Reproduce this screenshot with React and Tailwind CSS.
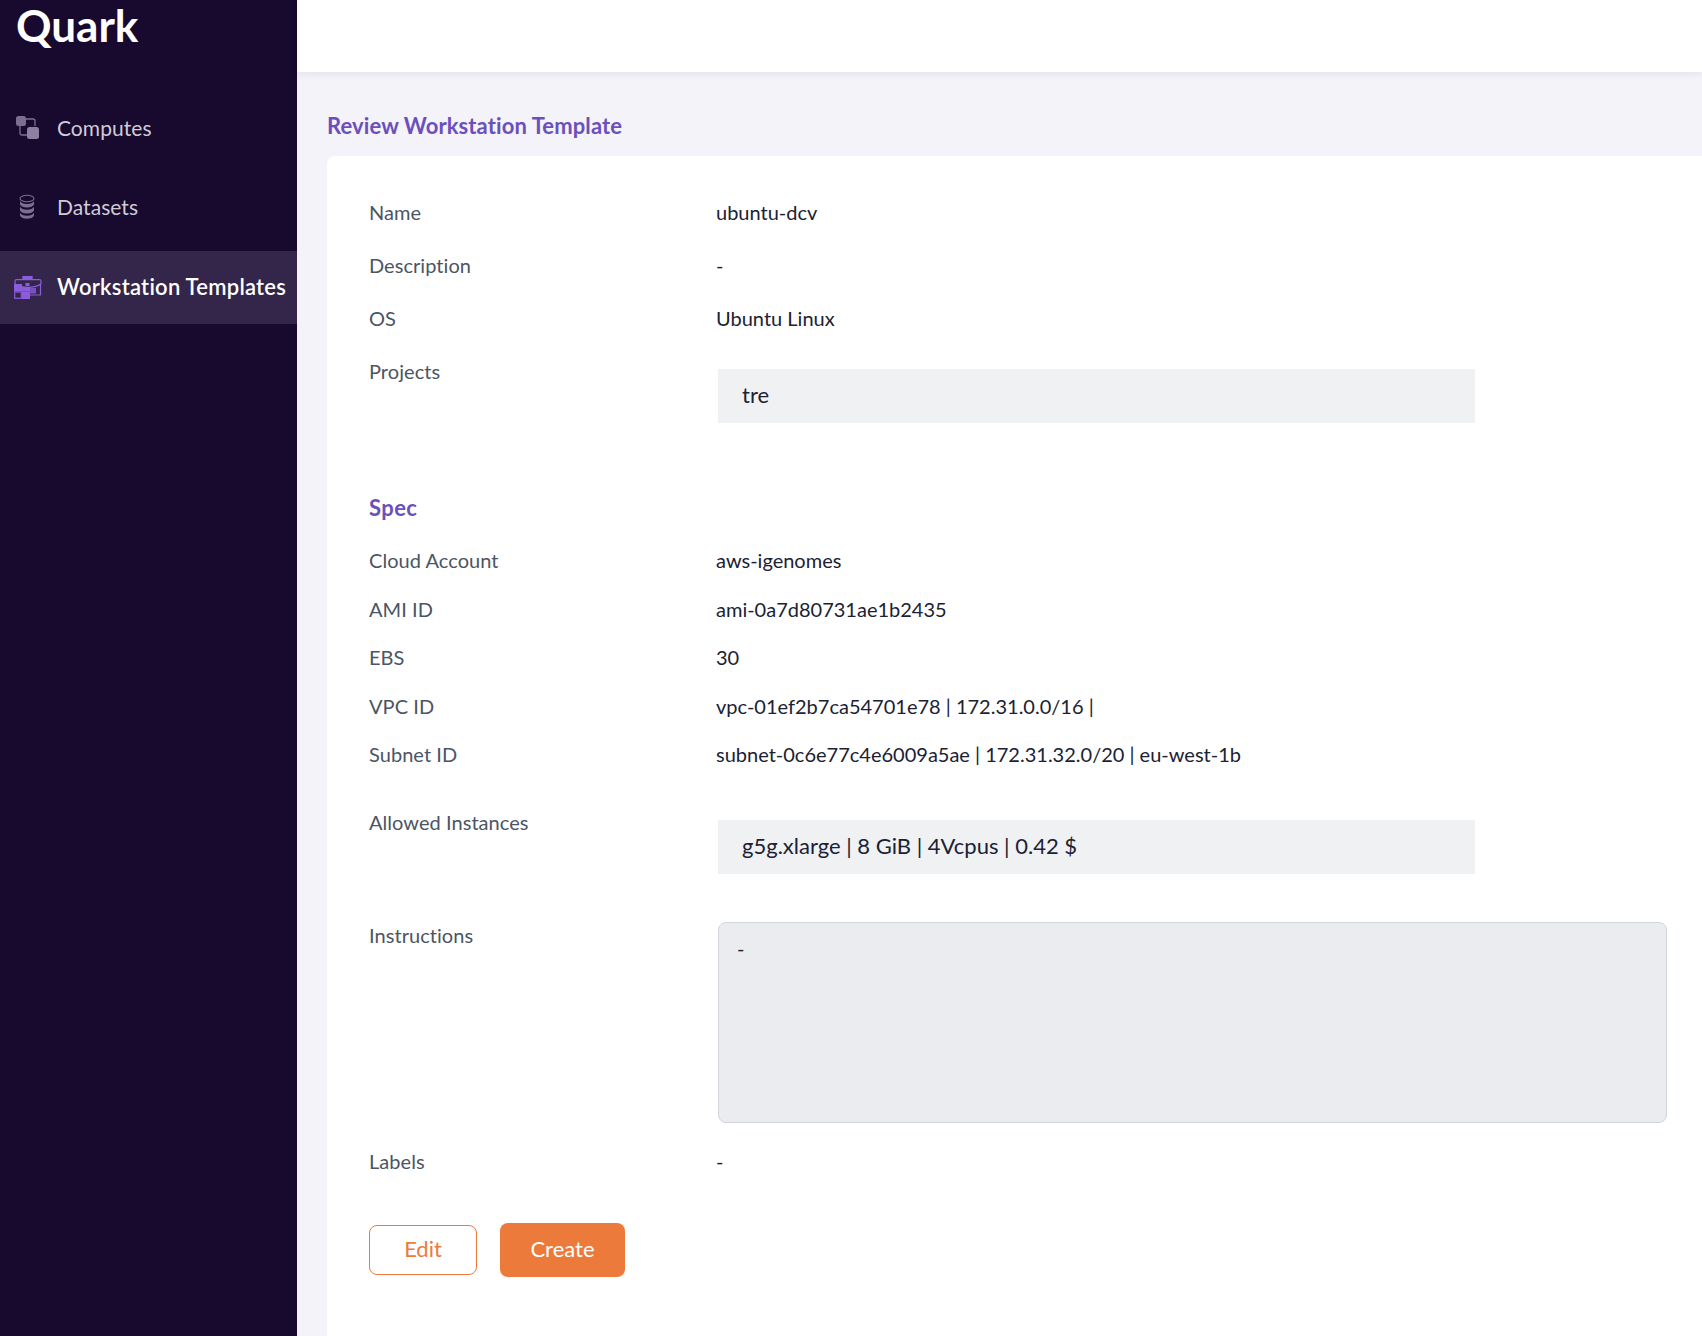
import React from "react";

function Row({ label, children, className = "" }) {
  return (
    <div className={`flex h-[26px] items-center pb-[2px] ${className}`}>
      <div className="w-[347px] shrink-0 tracking-[0.05px] text-[#4b5563]">{label}</div>
      <div className="text-[#1a2233]">{children}</div>
    </div>
  );
}

function ChipRow({ label, children, className = "" }) {
  return (
    <div className={`flex ${className}`}>
      <div className="w-[347px] shrink-0 leading-[24px] tracking-[0.05px] text-[#4b5563]">{label}</div>
      <div className="ml-[2px] mt-[10px] flex h-[54px] w-[757px] items-center bg-[#f0f1f3] pb-[3px] pl-6 text-[22px] text-[#1a2233]">
        {children}
      </div>
    </div>
  );
}

function ComputesIcon() {
  return (
    <svg width="24" height="24" viewBox="0 0 24 24" fill="none">
      <rect x="0" y="0" width="10" height="10" rx="2.5" fill="#7d6e90" />
      <rect x="11" y="11" width="12" height="12" rx="2.5" fill="#8d7fa0" />
      <path d="M10 3h7a2 2 0 0 1 2 2v5M4 10v7a2 2 0 0 0 2 2h5" stroke="#7d6e90" strokeWidth="1.3" />
    </svg>
  );
}

function DatasetIcon() {
  return (
    <svg width="16" height="26" viewBox="0 0 16 26" fill="none">
      <ellipse cx="8" cy="4.5" rx="7" ry="3.2" stroke="#7d6e90" strokeWidth="1.1" />
      <path d="M1 7c1 2 3.500 3 7 3s6-1 7-3v3.500c-1 2-3.500 3-7 3s-6-1-7-3z" fill="#7d6e90" />
      <path d="M1 12.800c1 2 3.500 3 7 3s6-1 7-3v3.700c-1 2-3.500 3-7 3s-6-1-7-3z" fill="#7d6e90" />
      <path d="M1 18.800c1 2 3.500 3 7 3s6-1 7-3v2.700c-1 2.200-3.500 3.300-7 3.300s-6-1.100-7-3.300z" fill="#7d6e90" />
    </svg>
  );
}

function WorkstationIcon() {
  return (
    <svg width="28" height="24" viewBox="0 0 28 24" fill="none">
      <path d="M9 4V1.600h9V4" fill="#8b5cdb" stroke="#8b5cdb" strokeWidth="1.400" />
      <path d="M1 6.200c0-1 .6-1.600 1.600-1.600h22.800c1 0 1.600.6 1.600 1.600v2.600c-3 2.400-7.500 3.600-13 3.600S4 11.200 1 8.800z" stroke="#8b5cdb" strokeWidth="1.200" />
      <rect x="11.500" y="8" width="4" height="3" fill="#8b5cdb" />
      <path d="M26.500 9v11H16" stroke="#8b5cdb" strokeWidth="1.200" />
      <rect x="0" y="9" width="8" height="7.500" fill="#8b5cdb" />
      <rect x="8" y="16.500" width="8" height="7.500" fill="#8b5cdb" />
      <rect x="0.700" y="17" width="6.600" height="6.300" stroke="#8b5cdb" strokeWidth="1.200" />
      <rect x="8" y="12" width="8" height="4.500" fill="#8b5cdb" />
      <rect x="16" y="13" width="6" height="5.500" fill="#8b5cdb" opacity="0.8" />
    </svg>
  );
}

function NavItem({ icon, label, active, iconClass }) {
  return (
    <div className={`flex h-[73px] items-center ${active ? "bg-[#33264a] pb-[2px] font-semibold text-white" : "pb-[4px] text-[#cfcbd6]"}`}>
      <div className={`flex w-[57px] shrink-0 ${iconClass}`}>{icon}</div>
      <span className={active ? "text-[22px] tracking-[0.25px]" : "text-[21px] tracking-[0.05px]"}>{label}</span>
    </div>
  );
}

export default function App() {
  return (
    <div
      className="flex h-[1336px] w-[1702px] overflow-hidden bg-[#f3f3f9] text-[20px]"
      style={{ fontFamily: '"Lato", "Open Sans", sans-serif' }}
    >
      <aside className="flex w-[297px] shrink-0 flex-col bg-[#18092f]">
        <div className="h-[93px] pl-4 text-[44px] font-bold leading-[50px] text-white">Quark</div>
        <nav className="flex flex-col gap-[6px]">
          <NavItem icon={<ComputesIcon />} label="Computes" iconClass="pl-4" />
          <NavItem icon={<DatasetIcon />} label="Datasets" iconClass="pl-[19px]" />
          <NavItem icon={<WorkstationIcon />} label="Workstation Templates" active iconClass="pl-[14px]" />
        </nav>
      </aside>

      <main className="flex min-w-0 flex-1 flex-col">
        <header className="h-[72px] shrink-0 bg-white shadow-[0_2px_8px_rgba(30,30,60,0.08)]" />
        <h1 className="ml-[30px] mt-[40px] text-[22px] font-bold leading-[28px] tracking-[0.1px] text-[#6b4fbb]">
          Review Workstation Template
        </h1>
        <section className="ml-[30px] mt-[16px] flex-1 rounded-tl-lg bg-white pl-[42px] pr-[35px] pt-[44px]">
          <Row label="Name">ubuntu-dcv</Row>
          <Row label="Description" className="mt-[27px]">-</Row>
          <Row label="OS" className="mt-[27px]">Ubuntu Linux</Row>
          <ChipRow label="Projects" className="mt-[27px]">tre</ChipRow>
          <h2 className="mt-[71px] text-[22px] font-bold leading-[28px] tracking-[0.4px] text-[#6b4fbb]">Spec</h2>
          <Row label="Cloud Account" className="mt-[26px]">aws-igenomes</Row>
          <Row label="AMI ID" className="mt-[23px]">ami-0a7d80731ae1b2435</Row>
          <Row label="EBS" className="mt-[22px]">30</Row>
          <Row label="VPC ID" className="mt-[23px]">vpc-01ef2b7ca54701e78 | 172.31.0.0/16 |</Row>
          <Row label="Subnet ID" className="mt-[22px]">subnet-0c6e77c4e6009a5ae | 172.31.32.0/20 | eu-west-1b</Row>
          <ChipRow label="Allowed Instances" className="mt-[42px]">g5g.xlarge | 8 GiB | 4Vcpus | 0.42 $</ChipRow>
          <div className="mt-[48px] flex">
            <div className="w-[347px] shrink-0 leading-[26px] tracking-[0.05px] text-[#4b5563]">Instructions</div>
            <div className="ml-[2px] h-[201px] flex-1 rounded-lg border border-[#d1d5db] bg-[#ebecf0] px-[18px] py-[12px] leading-[26px] text-[#1a2233]">
              -
            </div>
          </div>
          <Row label="Labels" className="mt-[26px]">-</Row>
          <div className="mt-[48px] flex items-center gap-[23px]">
            <button className="h-[50px] w-[108px] rounded-lg border border-[#ec7a3b] bg-white pb-[3px] text-[22px] text-[#ec7a3b]">Edit</button>
            <button className="h-[54px] w-[125px] rounded-lg bg-[#ec7a3b] pb-[3px] text-[22px] text-white">Create</button>
          </div>
        </section>
      </main>
    </div>
  );
}
